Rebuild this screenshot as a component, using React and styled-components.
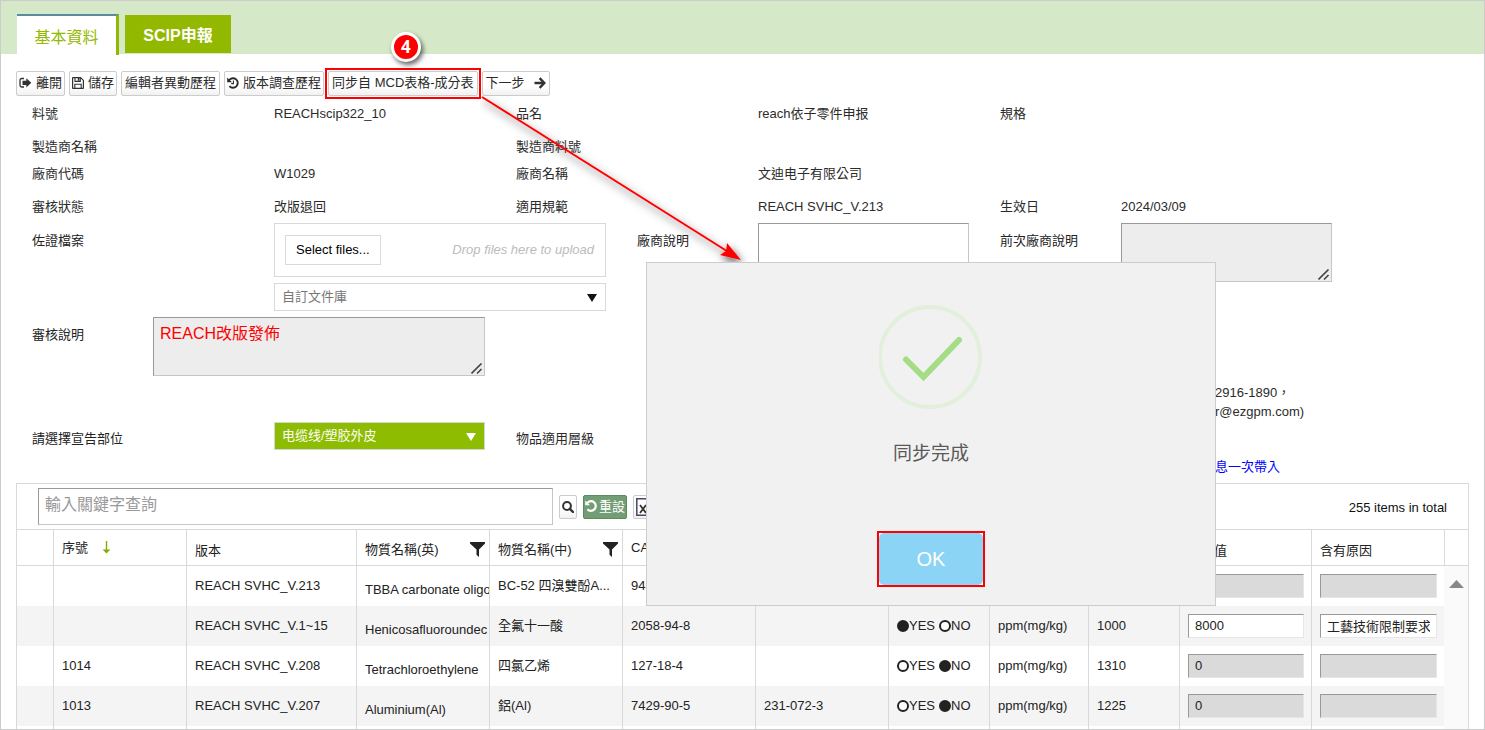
import React from "react";
import styled, { createGlobalStyle, css } from "styled-components";

const GlobalStyle = createGlobalStyle`
  *, *::before, *::after { box-sizing: border-box; }
  body { margin: 0; background: #fff; }
  body, button, input, select, textarea {
    font-family: "Liberation Sans", "Noto Sans CJK TC", sans-serif;
    font-size: 13px;
    color: #2b2b2b;
  }
`;

const Page = styled.div`
  position: relative;
  display: flex;
  flex-direction: column;
  height: 100vh;
  min-height: 600px;
  overflow: hidden;
  border: 1px solid #ccc;
  line-height: 20px;
`;

/* ---------- tabs ---------- */
const TabBar = styled.nav`
  display: flex;
  align-items: flex-start;
  gap: 6px;
  height: 53px;
  flex: none;
  padding: 13px 0 0 16px;
  background: #d5e9c8;
`;

const Tab = styled.button`
  padding: 0;
  border: 0;
  font-size: 16px;
  white-space: nowrap;
  ${(p) =>
    p.$active
      ? css`
          width: 102px;
          height: 41px;
          background: #fff;
          border-top: 2px solid #5b8ba0;
          border-right: 3px solid #92b900;
          color: #92b900;
        `
      : css`
          width: 106px;
          height: 38px;
          margin-top: 1px;
          background: #92b900;
          color: #fff;
          font-weight: bold;
        `}
`;

/* ---------- toolbar ---------- */
const Toolbar = styled.div`
  display: flex;
  flex: none;
  gap: 4px;
  padding: 17px 15px 0;
`;

const ToolButton = styled.button`
  position: relative;
  display: flex;
  align-items: center;
  gap: ${(p) => p.$gap || 4}px;
  height: 25px;
  padding: 0 ${(p) => (p.$icon ? 2 : 3)}px 2px;
  border: 1px solid #ccc;
  border-radius: 2px;
  background: linear-gradient(#fff 60%, #f1f1f1);
  white-space: nowrap;
  line-height: 20px;
`;

const Highlight = styled.span`
  position: absolute;
  inset: -4px;
  border: 2px solid #f00;
  pointer-events: none;
`;

const StepBadge = styled.span`
  position: absolute;
  left: 50%;
  top: -40px;
  width: 30px;
  height: 30px;
  margin-left: -12px;
  border: 3px solid #fff;
  border-radius: 50%;
  background: #f00;
  box-shadow: 2px 3px 5px rgba(0, 0, 0, 0.6);
  color: #fff;
  font: bold 17px/24px "Open Sans", "Liberation Sans", sans-serif;
  text-align: center;
`;

/* ---------- form ---------- */
const Form = styled.form`
  flex: none;
  margin: 7px 16px 0 15px;
`;

const Row = styled.div`
  display: grid;
  grid-template-columns: repeat(12, minmax(0, 1fr));
  height: ${(p) => p.$height}px;
`;

const Cell = styled.div`
  grid-column: ${(p) => p.$col} / span ${(p) => p.$span || 2};
  padding: ${(p) => p.$top || 0}px 15px 0 16px;
  white-space: nowrap;
`;

const FieldLabel = styled.label`
  color: #222;
`;

const Contact = styled.div`
  padding-left: 94px;
  line-height: 19px;
`;

const BringInLink = styled.a`
  display: block;
  padding-left: 94px;
  color: #00f;
  text-decoration: none;
`;

const DropZone = styled.div`
  display: flex;
  align-items: center;
  justify-content: space-between;
  height: 54px;
  padding: 0 11px 0 10px;
  border: 1px solid #d9d9d9;
  color: #bbb;
  font-style: italic;
`;

const SelectFiles = styled.button`
  height: 30px;
  padding: 0 10px 2px;
  border: 1px solid #d9d9d9;
  background: #fff;
  color: #000;
`;

const SelectWrap = styled.div`
  position: relative;
  height: 28px;
  margin-top: ${(p) => p.$gap || 0}px;
`;

const Select = styled.select`
  appearance: none;
  display: block;
  width: 100%;
  height: 28px;
  padding: 0 24px 2px 7px;
  border: 1px solid ${(p) => (p.$green ? "#d0d8d0" : "#d9d9d9")};
  border-radius: 0;
  background: ${(p) => (p.$green ? "#8ebc00" : "#fff")};
  color: ${(p) => (p.$green ? "#fff" : "#777")};
`;

const Caret = styled.svg`
  position: absolute;
  right: 9px;
  top: 11px;
  width: 10px;
  height: 8px;
  fill: ${(p) => (p.$green ? "#fff" : "#111")};
  pointer-events: none;
`;

const AreaWrap = styled.div`
  position: relative;
  height: 59px;
`;

const Area = styled.textarea`
  display: block;
  width: 100%;
  height: 59px;
  padding: 6px;
  resize: none;
  border: 1px solid #c6c6c6;
  border-top-color: #999;
  border-left-color: #999;
  border-radius: 0;
  background: ${(p) => (p.readOnly ? "#ededed" : "#fff")};
  color: #f00;
  font-size: 16px;
  line-height: 20px;
`;

const Grip = styled.svg`
  position: absolute;
  right: 2px;
  bottom: 1px;
  width: 12px;
  height: 12px;
  stroke: #444;
  stroke-width: 1.6;
  pointer-events: none;
`;

/* ---------- substance list ---------- */
const Panel = styled.section`
  flex: 1;
  min-height: 0;
  margin: 0 15px;
  overflow: hidden;
  border: 1px solid #d9d9d9;
  border-bottom: 0;
`;

const ListBar = styled.div`
  display: flex;
  align-items: center;
  gap: 6px;
  height: 45px;
  padding: 0 21px;
`;

const SearchBox = styled.input`
  width: 515px;
  height: 37px;
  padding: 0 6px 3px;
  border: 1px solid #c6c6c6;
  border-top-color: #999;
  border-left-color: #999;
  font-size: 16px;
  &::placeholder { color: #999; }
`;

const IconButton = styled.button`
  display: flex;
  align-items: center;
  justify-content: center;
  gap: 2px;
  height: 24px;
  padding: ${(p) => (p.$green ? "0 1px 2px" : "0 2px")};
  border: 1px solid ${(p) => (p.$green ? "#5d8a60" : "#ccc")};
  border-radius: 2px;
  background: ${(p) => (p.$green ? "#739d75" : "linear-gradient(#fff 60%, #f1f1f1)")};
  color: ${(p) => (p.$green ? "#fff" : "#333")};
  white-space: nowrap;
`;

const Total = styled.span`
  margin-left: auto;
  padding-top: 3px;
  color: #111;
`;

const Table = styled.table`
  width: 100%;
  table-layout: fixed;
  border-collapse: separate;
  border-spacing: 0;
  color: #222;
`;

const Th = styled.th`
  height: 37px;
  padding: ${(p) => p.$drop || 0}px 4px 0 8px;
  border: solid #d9d9d9;
  border-width: 1px 0 1px 1px;
  font-weight: normal;
  text-align: left;
  white-space: nowrap;
  &:first-child { border-left-width: 0; }
`;

const HeadFlex = styled.span`
  display: flex;
  align-items: center;
  justify-content: ${(p) => (p.$spread ? "space-between" : "flex-start")};
  gap: 14px;
`;

const Tr = styled.tr`
  height: 40px;
  background: ${(p) => (p.$shade ? "#f4f4f4" : "#fff")};
`;

const Td = styled.td`
  padding: ${(p) => p.$drop || 0}px 0 0 8px;
  border-left: 1px solid #d9d9d9;
  overflow: hidden;
  white-space: nowrap;
  &:first-child { border-left: 0; }
`;

const ScrollTrack = styled.td`
  padding: 14px 0 0 5px;
  background: #fafafa;
  vertical-align: top;
  line-height: 8px;
`;

const CellInput = styled.input`
  display: block;
  width: calc(100% - 7px);
  height: 24px;
  padding: 0 6px 2px;
  border: 1px solid #e6e6e6;
  border-top-color: #999;
  border-left-color: #999;
  background: ${(p) => (p.readOnly ? "#dadada" : "#fff")};
  color: #222;
`;

const Choices = styled.div`
  display: flex;
  gap: 4px;
`;

const Choice = styled.label`
  display: flex;
  align-items: center;
`;

const Radio = styled.input`
  appearance: none;
  width: 12px;
  height: 12px;
  margin: 0;
  border: 2px solid #222;
  border-radius: 50%;
  background: #fff;
  &:checked { background: #222; }
`;

/* ---------- dialog and callout ---------- */
const Dialog = styled.div`
  position: absolute;
  left: 645px;
  top: 261px;
  display: flex;
  flex-direction: column;
  align-items: center;
  width: 570px;
  height: 344px;
  padding: 42px 0 0;
  border: 1px solid #ccc;
  background: #f1f1f1;
`;

const DialogText = styled.p`
  margin: 31px 0 63px;
  color: #595959;
  font-size: 19px;
  line-height: 28px;
`;

const OkFrame = styled.div`
  border: 2px solid #f00;
  background: #fff;
`;

const OkButton = styled.button`
  display: block;
  width: 104px;
  height: 52px;
  border: 0;
  border-radius: 5px;
  background: #8cd4f5;
  color: #fff;
  font-size: 20px;
`;

const Callout = styled.svg`
  position: absolute;
  left: 479px;
  top: 94px;
  width: 280px;
  height: 190px;
  pointer-events: none;
`;

/* ---------- icons ---------- */
const LeaveIcon = () => (
  <svg width="13" height="12" viewBox="0 0 13 12" aria-hidden="true">
    <path d="M5 1.5H2.8Q1 1.5 1 3.2V8.3Q1 10 2.8 10H5" fill="none" stroke="#333" strokeWidth="1.3" />
    <path d="M3.5 3.700H7.3V1.2L12.3 5.8L7.3 10.4V7.900H3.500Z" fill="#333" />
  </svg>
);
const SaveIcon = () => (
  <svg width="12" height="12" viewBox="0 0 12 12" aria-hidden="true">
    <path d="M.6 1Q.6.6 1 .6H8.6L11.4 3.4V11Q11.4 11.4 11 11.4H1Q.6 11.4.6 11Z" fill="none" stroke="#333" strokeWidth="1.2" />
    <path d="M3 .8V4.4H8.3V.8M2.8 11.2V7.2H9.2V11.2" fill="none" stroke="#333" strokeWidth="1.1" />
    <path d="M5.8 1H7.4V3.8H5.8Z" fill="#333" />
  </svg>
);
const HistoryIcon = ({ hands }) => (
  <svg width="12" height="12" viewBox="0 0 12 12" aria-hidden="true">
    <path d="M2.2 3A4.800 4.800 0 1 1 2.4 9.2" fill="none" stroke="currentColor" strokeWidth={hands ? 1.9 : 2.2} />
    <path d="M.2.4V5.200H5Z" fill="currentColor" />
    {hands && <path d="M6.400 3.600V6.600H4.200" fill="none" stroke="currentColor" strokeWidth="1.1" />}
  </svg>
);
const NextIcon = () => (
  <svg width="12" height="12" viewBox="0 0 12 12" aria-hidden="true">
    <path d="M.5 6H10.2M5.6 1.2L10.4 6L5.6 10.8" fill="none" stroke="#333" strokeWidth="2.4" />
  </svg>
);
const SearchIcon = () => (
  <svg width="12" height="12" viewBox="0 0 12 12" aria-hidden="true">
    <circle cx="5" cy="5" r="3.9" fill="none" stroke="#333" strokeWidth="2" />
    <path d="M7.8 7.8L11 11" stroke="#333" strokeWidth="2.4" strokeLinecap="round" />
  </svg>
);
const SheetIcon = () => (
  <svg width="16" height="18" viewBox="0 0 16 18" aria-hidden="true">
    <path d="M.8.8H15V17.2H.8Z" fill="#fff" stroke="#4a4560" strokeWidth="1.5" />
    <path d="M4 7L10 15M10 7L4 15" stroke="#333" strokeWidth="1.8" />
  </svg>
);
const FilterIcon = () => (
  <svg width="15" height="15" viewBox="0 0 15 15" aria-hidden="true">
    <path d="M0 0H15V1.5L9 7.5V15L6.5 12.8V7.5L0 1.5Z" fill="#222" />
  </svg>
);
const SortIcon = () => (
  <svg width="9" height="13" viewBox="0 0 9 13" aria-hidden="true">
    <path d="M4.5 0V9" stroke="#7fae00" strokeWidth="1.4" />
    <path d="M.6 8.4H8.4L4.5 12.6Z" fill="#7fae00" />
  </svg>
);

function DropDown({ id, label, value, green, gap }) {
  return (
    <SelectWrap $gap={gap}>
      <Select id={id} aria-label={label} $green={green}>
        <option>{value}</option>
      </Select>
      <Caret $green={green} viewBox="0 0 10 8">
        <path d="M0 0H10L5 8Z" />
      </Caret>
    </SelectWrap>
  );
}

function TextArea({ id, value, readOnly }) {
  return (
    <AreaWrap>
      <Area id={id} defaultValue={value} readOnly={readOnly} />
      <Grip viewBox="0 0 12 12">
        <path d="M.5 10.5L10.500 .5M6 10.500L10.500 6" />
      </Grip>
    </AreaWrap>
  );
}

const plainRows = [
  [33, [[1, "料號"], [3, "REACHscip322_10"], [5, "品名"], [7, "reach依子零件申报"], [9, "規格"]]],
  [27, [[1, "製造商名稱"], [5, "製造商料號"]]],
  [33, [[1, "廠商代碼"], [3, "W1029"], [5, "廠商名稱"], [7, "文迪电子有限公司"]]],
  [27, [[1, "審核狀態"], [3, "改版退回"], [5, "適用規範"], [7, "REACH SVHC_V.213"], [9, "生效日"], [10, "2024/03/09"]]],
];

const widths = [36, 133, 170, 133, 133, 133, 133, 101, 99, 91, 132, 133, 24];

const substances = [
  { no: "", ver: "REACH SVHC_V.213", en: "TBBA carbonate oligo", zh: "BC-52 四溴雙酚A...", cas: "94334-64-2", ec: "", yes: false, limit: "1000", amount: "", reason: "" },
  { no: "", ver: "REACH SVHC_V.1~15", en: "Henicosafluoroundec", zh: "全氟十一酸", cas: "2058-94-8", ec: "", yes: true, limit: "1000", amount: "8000", reason: "工藝技術限制要求" },
  { no: "1014", ver: "REACH SVHC_V.208", en: "Tetrachloroethylene", zh: "四氯乙烯", cas: "127-18-4", ec: "", yes: false, limit: "1310", amount: "0", reason: "" },
  { no: "1013", ver: "REACH SVHC_V.207", en: "Aluminium(Al)", zh: "鋁(Al)", cas: "7429-90-5", ec: "231-072-3", yes: false, limit: "1225", amount: "0", reason: "" },
];

export default function App() {
  return (
    <Page>
      <GlobalStyle />
      <TabBar>
        <Tab $active>基本資料</Tab>
        <Tab>SCIP申報</Tab>
      </TabBar>

      <Toolbar>
        <ToolButton $icon><LeaveIcon />離開</ToolButton>
        <ToolButton $icon><SaveIcon />儲存</ToolButton>
        <ToolButton>編輯者異動歷程</ToolButton>
        <ToolButton $icon><HistoryIcon hands />版本調查歷程</ToolButton>
        <ToolButton>
          同步自 MCD表格-成分表
          <Highlight />
          <StepBadge>4</StepBadge>
        </ToolButton>
        <ToolButton $gap={9}>下一步<NextIcon /></ToolButton>
      </Toolbar>

      <Form>
        {plainRows.map(([height, cells], i) => (
          <Row key={i} $height={height}>
            {cells.map(([col, text]) => (
              <Cell key={col} $col={col} $span={col === 9 ? 1 : 2} $top={1}>{text}</Cell>
            ))}
          </Row>
        ))}
        <Row $height={94}>
          <Cell $col={1} $top={8}><FieldLabel htmlFor="files">佐證檔案</FieldLabel></Cell>
          <Cell $col={3} $span={3}>
            <DropZone>
              <SelectFiles id="files" type="button">Select files...</SelectFiles>
              Drop files here to upload
            </DropZone>
            <DropDown label="自訂文件庫" value="自訂文件庫" gap={6} />
          </Cell>
          <Cell $col={6} $span={1} $top={8}><FieldLabel htmlFor="vendor-note">廠商說明</FieldLabel></Cell>
          <Cell $col={7}><TextArea id="vendor-note" /></Cell>
          <Cell $col={9} $span={1} $top={8}><FieldLabel htmlFor="last-note">前次廠商說明</FieldLabel></Cell>
          <Cell $col={10}><TextArea id="last-note" readOnly /></Cell>
        </Row>
        <Row $height={105}>
          <Cell $col={1} $span={1} $top={8}><FieldLabel htmlFor="review-note">審核說明</FieldLabel></Cell>
          <Cell $col={2} $span={3}><TextArea id="review-note" value="REACH改版發佈" readOnly /></Cell>
          <Cell $col={10} $span={3} $top={66}>
            <Contact>2916-1890，<br />r@ezgpm.com)</Contact>
          </Cell>
        </Row>
        <Row $height={61}>
          <Cell $col={1} $top={7}><FieldLabel htmlFor="part">請選擇宣告部位</FieldLabel></Cell>
          <Cell $col={3}><DropDown id="part" value="电缆线/塑胶外皮" green /></Cell>
          <Cell $col={5} $top={7}>物品適用層級</Cell>
          <Cell $col={10} $span={3} $top={35}><BringInLink href="#">息一次帶入</BringInLink></Cell>
        </Row>
      </Form>

      <Panel>
        <ListBar>
          <SearchBox aria-label="查詢" placeholder="輸入關鍵字查詢" />
          <IconButton aria-label="搜尋"><SearchIcon /></IconButton>
          <IconButton $green><HistoryIcon />重設</IconButton>
          <IconButton aria-label="Excel"><SheetIcon /></IconButton>
          <Total>255 items in total</Total>
        </ListBar>
        <Table>
          <colgroup>
            {widths.map((w, i) => <col key={i} style={{ width: w }} />)}
          </colgroup>
          <thead>
            <tr>
              <Th />
              <Th><HeadFlex>序號<SortIcon /></HeadFlex></Th>
              <Th $drop={7}>版本</Th>
              <Th $drop={4}><HeadFlex $spread>物質名稱(英)<FilterIcon /></HeadFlex></Th>
              <Th $drop={4}><HeadFlex $spread>物質名稱(中)<FilterIcon /></HeadFlex></Th>
              <Th>CAS No.</Th>
              <Th>EC No.</Th>
              <Th />
              <Th />
              <Th />
              <Th $drop={7}>含有值</Th>
              <Th $drop={7}>含有原因</Th>
              <Th />
            </tr>
          </thead>
          <tbody>
            {substances.map((s, i) => (
              <Tr key={s.ver} $shade={i % 2 === 1}>
                <Td />
                <Td>{s.no}</Td>
                <Td>{s.ver}</Td>
                <Td $drop={7}>{s.en}</Td>
                <Td>{s.zh}</Td>
                <Td>{s.cas}</Td>
                <Td>{s.ec}</Td>
                <Td>
                  <Choices>
                    <Choice><Radio type="radio" name={`has-${i}`} defaultChecked={s.yes} />YES</Choice>
                    <Choice><Radio type="radio" name={`has-${i}`} defaultChecked={!s.yes} />NO</Choice>
                  </Choices>
                </Td>
                <Td>ppm(mg/kg)</Td>
                <Td>{s.limit}</Td>
                <Td><CellInput aria-label="含有值" defaultValue={s.amount} readOnly={!s.yes} /></Td>
                <Td><CellInput aria-label="含有原因" defaultValue={s.reason} readOnly={!s.yes} /></Td>
                {i === 0 && (
                  <ScrollTrack rowSpan={5}>
                    <svg width="15" height="8" viewBox="0 0 15 8" aria-hidden="true">
                      <path d="M7.5 0L15 8H0Z" fill="#888" />
                    </svg>
                  </ScrollTrack>
                )}
              </Tr>
            ))}
            <Tr>
              {widths.slice(1).map((w, i) => <Td key={i} />)}
            </Tr>
          </tbody>
        </Table>
      </Panel>

      <Callout viewBox="0 0 280 190" aria-hidden="true">
        <defs>
          <filter id="soft" x="-20%" y="-20%" width="140%" height="140%">
            <feDropShadow dx="2" dy="4" stdDeviation="4" floodColor="#000" floodOpacity="0.7" />
          </filter>
        </defs>
        <g filter="url(#soft)">
          <path d="M2 2L250 158" stroke="#f00" strokeWidth="2" />
          <path d="M261 165L240 160L246 156L247 148Z" fill="#f00" />
        </g>
      </Callout>

      <Dialog role="dialog" aria-label="同步完成">
        <svg width="104" height="104" viewBox="0 0 104 104" aria-hidden="true">
          <circle cx="51" cy="52" r="50" fill="none" stroke="#e2efdb" strokeWidth="4" />
          <path d="M27 54.500L44.500 72L80 35" fill="none" stroke="#a5dc86" strokeWidth="6" strokeLinecap="round" />
        </svg>
        <DialogText>同步完成</DialogText>
        <OkFrame><OkButton>OK</OkButton></OkFrame>
      </Dialog>
    </Page>
  );
}
